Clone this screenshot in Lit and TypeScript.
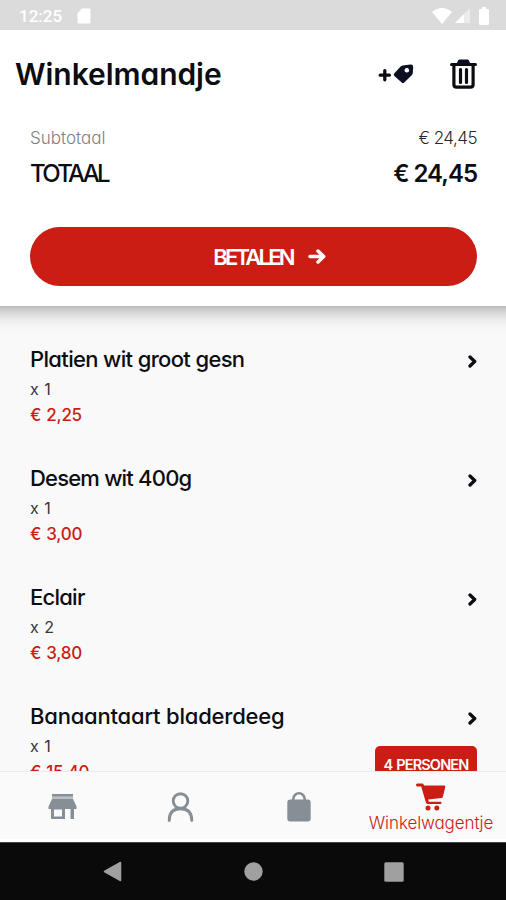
import { LitElement, html, css, nothing } from "lit";
import { customElement, property } from "lit/decorators.js";
import { styleMap } from "lit/directives/style-map.js";

interface Item { name: string; qty: number; price: string; tracking: number; badge?: string }

const ITEMS: Item[] = [
  { name: "Platien wit groot gesn", qty: 1, price: "€ 2,25", tracking: -0.65 },
  { name: "Desem wit 400g", qty: 1, price: "€ 3,00", tracking: -0.8 },
  { name: "Eclair", qty: 2, price: "€ 3,80", tracking: -0.75 },
  { name: "Banaantaart bladerdeeg", qty: 1, price: "€ 15,40", tracking: -0.2, badge: "4 PERSONEN" },
];

@customElement("cart-item")
export class CartItem extends LitElement {
  @property({ attribute: false }) item!: Item;

  static styles = css`
    :host { display: flex; justify-content: space-between; height: 82px; white-space: nowrap; line-height: 26px; }
    .name { font-size: 22px; font-weight: 450; }
    .qty { font-size: 16px; margin-top: 4px; color: #33363b; word-spacing: 1px; }
    .price { font-size: 17px; font-weight: 500; color: #cb1d13; letter-spacing: -0.3px; word-spacing: 1px; }
    .side { display: flex; flex-direction: column; align-items: flex-end; }
    svg { display: block; margin-top: 9px; flex: none; }
    .badge { margin-top: 20.5px; flex: none; width: 102px; height: 37px; border-radius: 5px; background: #cb1d13; color: #fff;
      font-size: 14.5px; font-weight: 600; letter-spacing: -0.85px; word-spacing: 1px; line-height: 37px; text-align: center; }
  `;

  render() {
    const i = this.item;
    return html`
      <div>
        <div class="name" style=${styleMap({ letterSpacing: `${i.tracking}px` })}>${i.name}</div>
        <div class="qty">x ${i.qty}</div>
        <div class="price">${i.price}</div>
      </div>
      <div class="side">
        <svg width="9" height="13" viewBox="0 0 9 13"><path d="M2 2 6.7 6.5 2 11" fill="none" stroke="#0b0d12" stroke-width="3.3" stroke-linecap="round" stroke-linejoin="round"/></svg>
        ${i.badge ? html`<div class="badge">${i.badge}</div>` : nothing}
      </div>`;
  }
}

@customElement("app-root")
export class AppRoot extends LitElement {
  static styles = css`
    :host { display: flex; flex-direction: column; width: 506px; height: 900px; overflow: hidden; background: #f9f9f9; color: #0b0d12;
      font-family: Inter, "Liberation Sans", sans-serif; font-feature-settings: "cv11"; white-space: nowrap; }
    * { box-sizing: border-box; }
    svg { display: block; flex: none; }

    .status { height: 30px; flex: none; background: #dbdbdb; color: #fff; display: flex; align-items: center; padding: 1px 17px 0 19px; }
    .time { font: 500 17px/20px Roboto, sans-serif; width: 58px; }
    .signals { margin-left: auto; display: flex; align-items: center; }
    .signals .cell { margin: 0 9px 0 3px; }

    .head { height: 276px; flex: none; background: #fff; }
    .bar { height: 87px; display: flex; align-items: center; padding: 0 29px 0 15px; }
    .title { font-size: 30px; font-weight: 600; letter-spacing: -0.05px; margin-right: auto; }
    .bar .trash { margin-left: 36px; }
    .row { display: flex; justify-content: space-between; align-items: center; padding: 0 29px 0 30px; height: 35px; }
    .row.sub { height: 41px; font-size: 17px; font-weight: 300; }
    .row.sub .label { color: #7b7f87; }
    .row.sub .amount { letter-spacing: -0.5px; color: #26282d; }
    .row.total { height: 30px; font-size: 24px; font-weight: 500; }
    .row.total .label { letter-spacing: -2.7px; }
    .row.total .amount { font-weight: 600; letter-spacing: -1px; }
    .pay { margin: 39px 29px 0 30px; height: 59px; border-radius: 30px; background: #cb1d13; color: #fff; display: flex; align-items: center;
      justify-content: center; gap: 15px; padding-left: 32px; font-size: 22px; font-weight: 600; }
    .pay span { letter-spacing: -2.8px; }

    .list { flex: 1; min-height: 0; overflow: hidden; padding: 40px 29px 0 30px; display: flex; flex-direction: column; gap: 37.1px;
      background: linear-gradient(#b9b9b9, #cacaca 3px, #dcdcdc 8px, #ececec 14px, #f5f5f5 20px, #f9f9f9 26px); }
    .list cart-item { flex: none; }

    .nav { height: 71px; flex: none; display: grid; grid-template-columns: 120px 117px 119px 146px; padding: 0 2px; background: #fafafa;
      border-top: 1px solid #ebebeb; border-bottom: 3px solid #fff; justify-items: center; align-items: center; color: #868e96; }
    .nav .icon { margin-top: 3px; }
    .tab { display: flex; flex-direction: column; align-items: center; gap: 1px; margin-top: 5px; color: #cb1d13; font-size: 17px; line-height: 22px; }
    .tab span { letter-spacing: -0.1px; font-weight: 350; }
    .sys { height: 58px; flex: none; background: #0a0a0a; border-top: 1px solid #444; display: grid;
      grid-template-columns: 42px 141px 141px 139px 43px; align-items: center; }
    .sys svg { justify-self: center; }
    .sys svg:first-child { grid-column: 2; }
  `;

  render() {
    return html`
      <div class="status">
        <span class="time">12:25</span>
        <svg width="14" height="16" viewBox="0 0 14 16" fill="#fff"><path d="M5 .5h7.500Q13.500.5 13.500 1.500v13q0 1-1 1h-11q-1 0-1-1V5.500z"/></svg>
        <div class="signals">
          <svg width="20" height="16" viewBox="0 0 20 16" fill="#fff"><path d="M0 4Q10-4 20 4L10 16z"/></svg>
          <svg class="cell" width="15" height="15" viewBox="0 0 15 15"><path d="M15 0v15H0z" fill="#ececec"/><path d="M9 6v9H0z" fill="#fff"/></svg>
          <svg width="10" height="18" viewBox="0 0 10 18" fill="#fff"><path d="M3 0h4v2h2q1 0 1 1v14q0 1-1 1H1q-1 0-1-1V3q0-1 1-1h2z"/></svg>
        </div>
      </div>

      <div class="head">
        <div class="bar">
          <span class="title">Winkelmandje</span>
          <svg width="36" height="22" viewBox="0 0 36 22">
            <path d="M2.200 12.200h9.200M6.800 7.600v9.200" stroke="#0b0d12" stroke-width="3.300" stroke-linecap="round"/>
            <path fill="#0b1020" fill-rule="evenodd" d="M24.500 2.400 32.600 1.600q2.600-.1 2.600 2.300L34.800 10q-.1 1.100-.9 1.900l-7.600 7.600q-1.300 1.300-2.600 0l-7.300-6.600q-1.300-1.300 0-2.600l6.200-6.800q.8-.9 1.900-1.100zM28.800 5a2.300 2.300 0 1 0 .1 0z"/>
          </svg>
          <svg class="trash" width="27" height="30" viewBox="0 0 27 30">
            <path d="M1.500 5.500h24" stroke="#0b0d12" stroke-width="3" stroke-linecap="round"/>
            <path d="M6.500 5 8.200 1.200Q8.500.4 9.400.4h8.200q.9 0 1.200.8L20.500 5z" fill="#0b1020"/>
            <path d="M3.900 6v19.500q0 2.700 2.700 2.700h13.800q2.700 0 2.700-2.700V6" fill="none" stroke="#0b0d12" stroke-width="3.200"/>
            <path d="M10.500 10.500v13M16.500 10.500v13" stroke="#0b0d12" stroke-width="3.200" stroke-linecap="round"/>
          </svg>
        </div>
        <div class="row sub"><span class="label">Subtotaal</span><span class="amount">€ 24,45</span></div>
        <div class="row total"><span class="label">TOTAAL</span><span class="amount">€ 24,45</span></div>
        <div class="pay">
          <span>BETALEN</span>
          <svg width="18" height="17" viewBox="0 0 18 17"><path d="M2 8.500H15M10 3 15.700 8.500 10 14" fill="none" stroke="#fff" stroke-width="3.500" stroke-linecap="round" stroke-linejoin="round"/></svg>
        </div>
      </div>

      <div class="list">${ITEMS.map((i) => html`<cart-item .item=${i}></cart-item>`)}</div>

      <div class="nav">
        <svg class="icon" width="29" height="26" viewBox="0 0 29 26" fill="currentColor">
          <path d="M4 0h21v2.600H4z"/><path d="M4 2.600h21V5H4z" opacity=".55"/>
          <path d="M4 5h21l3.500 7.500v2.500h-28v-2.500z"/>
          <path fill-rule="evenodd" d="M3 14h14v11H3zM6 15.500v7h8v-7zM22.500 14h3.500v11h-3.500z"/>
        </svg>
        <svg class="icon" width="27" height="30" viewBox="0 0 27 30" fill="none" stroke="currentColor" stroke-width="2.900">
          <circle cx="13.500" cy="9" r="7.300"/><path d="M2.200 28.500C2.200 20 7 16.700 13.500 16.700S24.800 20 24.800 28.500" stroke-linecap="round"/>
        </svg>
        <svg class="icon" width="24" height="30" viewBox="0 0 24 30">
          <rect x=".3" y="7.500" width="23.400" height="22" rx="3" fill="currentColor"/>
          <path d="M6.300 9V7a5.700 5.700 0 0 1 11.400 0v2" fill="none" stroke="currentColor" stroke-width="2.600"/>
        </svg>
        <div class="tab">
          <svg width="30" height="28" viewBox="0 0 30 28" fill="currentColor">
            <path d="M1.300.5h5q1 0 1.300 1L8 2.600h20.300q1.300 0 1 1.300l-2.500 10q-.2 1-1.300 1.100l-13.300 1.500.5 2.300h12.600v2.200H11.800q-1.500 0-1.900-1.500L5.200 3.400H1.300Q0 3.400 0 2T1.300.5z"/>
            <circle cx="12" cy="25" r="2.500"/><circle cx="20.800" cy="25" r="2.500"/>
          </svg>
          <span>Winkelwagentje</span>
        </div>
      </div>

      <div class="sys">
        <svg width="19" height="21" viewBox="0 0 19 21"><path d="M17.500 1.500v18L1.500 10.500z" fill="#a0a0a0" stroke="#a0a0a0" stroke-width="1.500" stroke-linejoin="round"/></svg>
        <svg width="19" height="19" viewBox="0 0 19 19"><circle cx="9.500" cy="9.500" r="9.200" fill="#a0a0a0"/></svg>
        <svg width="20" height="20" viewBox="0 0 20 20"><rect x=".3" y=".3" width="19.400" height="19.400" rx="1.500" fill="#a0a0a0"/></svg>
      </div>`;
  }
}
